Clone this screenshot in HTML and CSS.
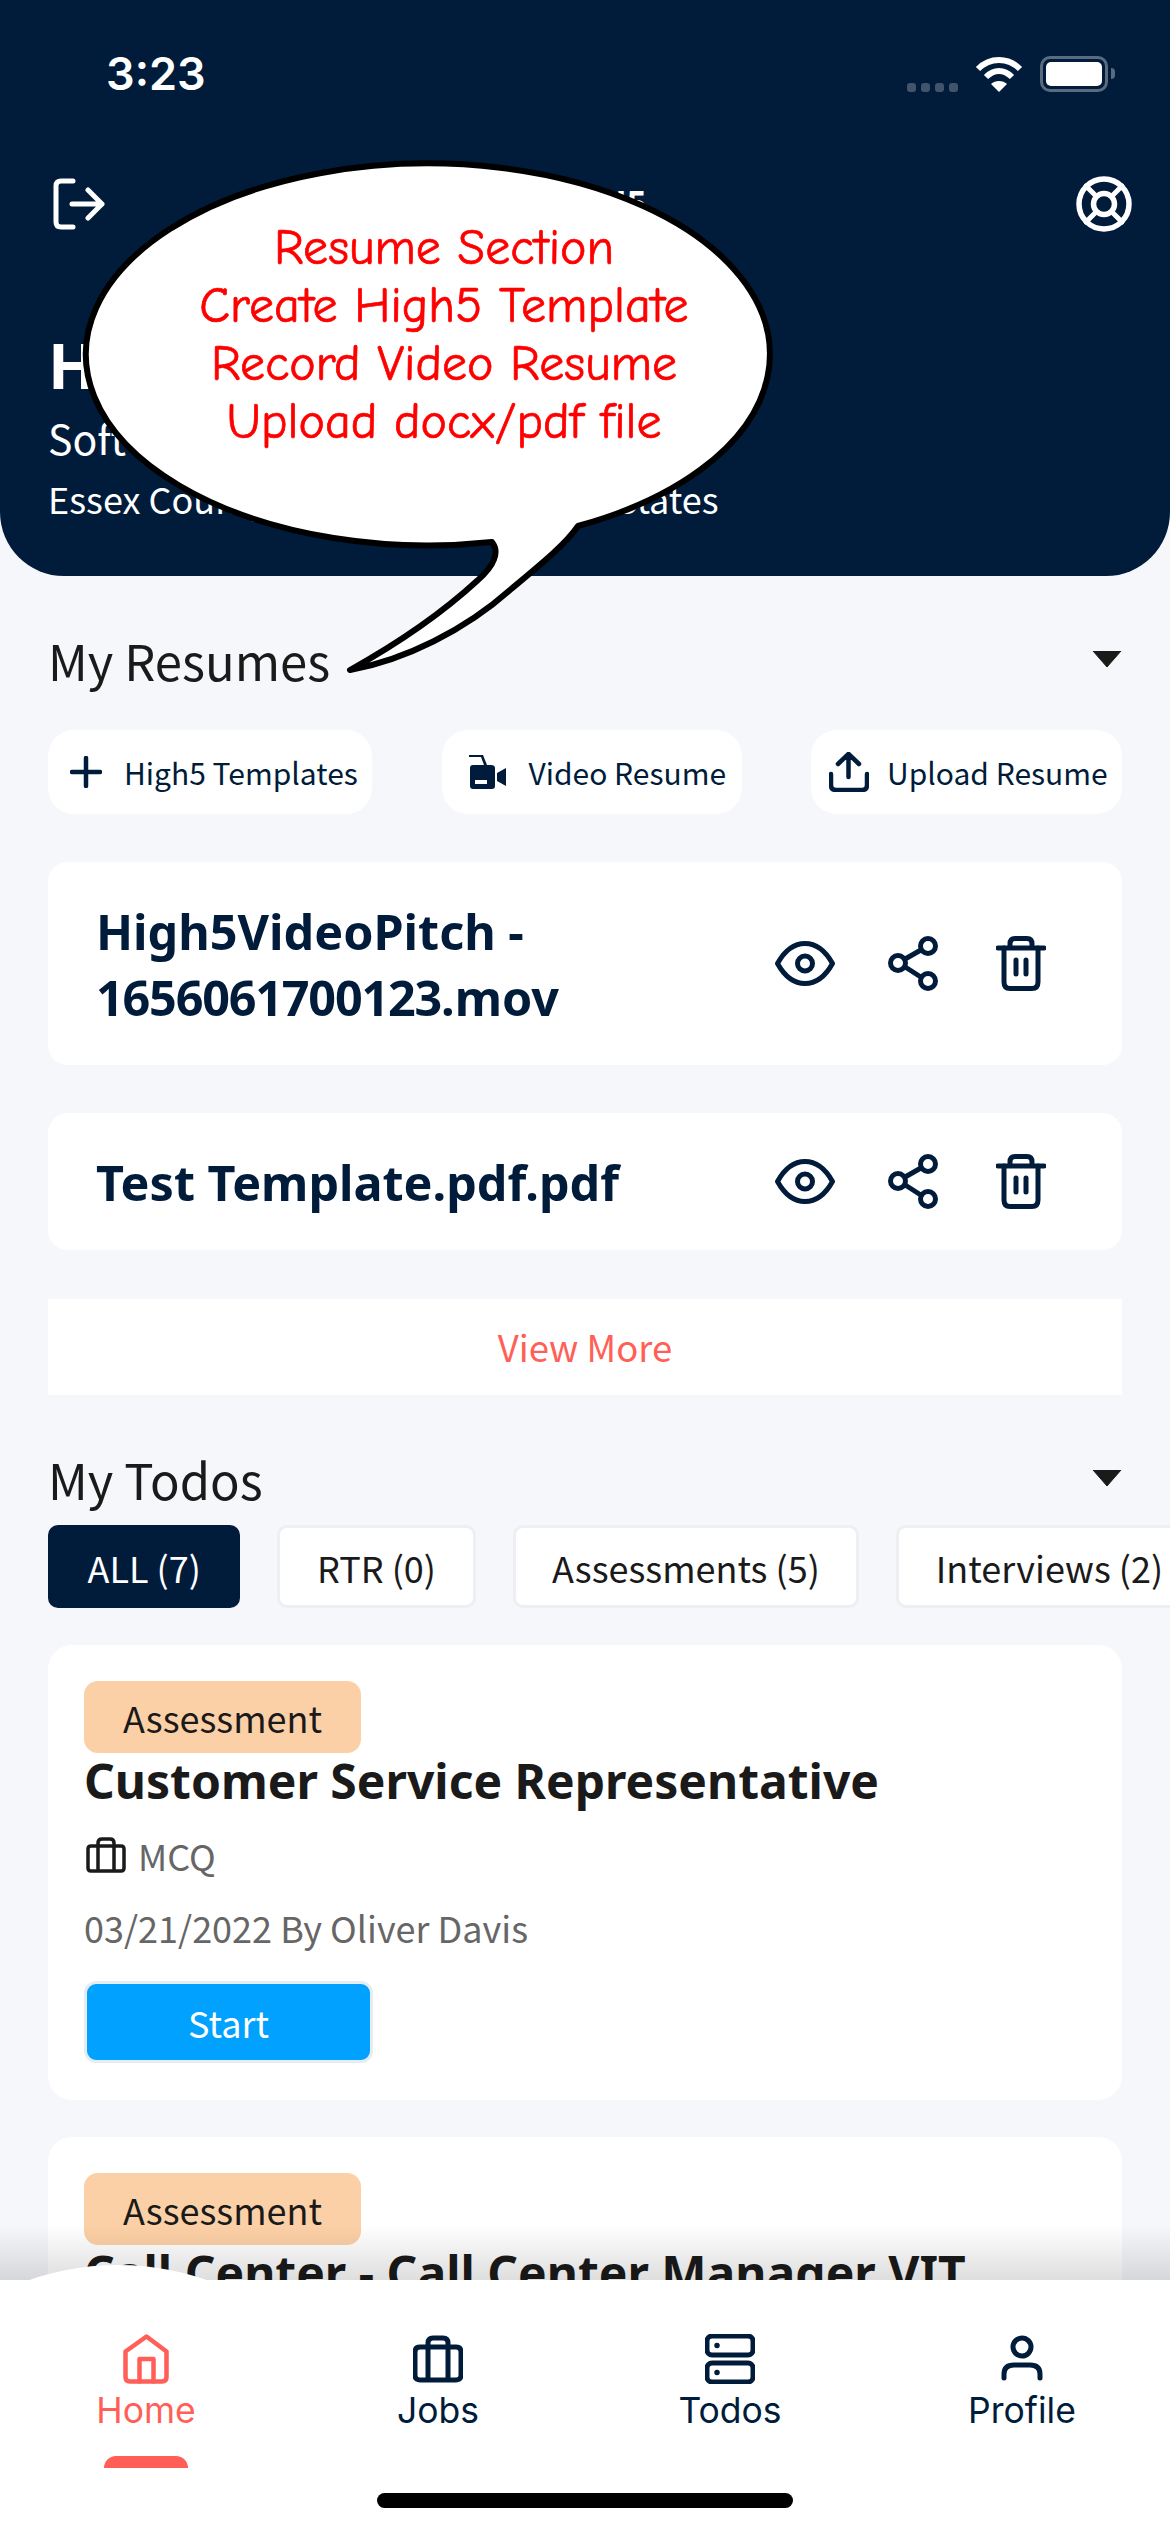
FILE: index.html
```html
<!DOCTYPE html>
<html lang="en">
<head>
<meta charset="utf-8">
<title>High5 Home</title>
<link rel="stylesheet" href="styles.css">
</head>
<body>
<div class="screen">
  <header class="hero">
    <div class="status">
      <span class="clock">3:23</span>
      <div class="status-icons">
        <div class="signal"><i></i><i></i><i></i><i></i></div>
        <svg class="wifi" width="48" height="36" viewBox="0 0 48 36"><path class="wifi-arc" d="M3 13 C15 1 33 1 45 13"/><path class="wifi-arc" d="M11 21 C19 13 29 13 37 21"/><path class="wifi-dot" d="M24 36 L16 28 C20 24 28 24 32 28 Z"/></svg>
        <div class="battery"><div class="battery-fill"></div></div>
        <div class="battery-nub"></div>
      </div>
    </div>
    <div class="toprow">
      <svg class="exit-icon" width="52" height="52" viewBox="0 0 52 52"><path d="M20 3 H8 Q3 3 3 8 V44 Q3 49 8 49 H20"/><path d="M19 26 H49 M35 12 L49 26 L35 40"/></svg>
      <span class="brand">HIGH5</span>
      <svg class="help-icon" width="56" height="56" viewBox="0 0 56 56"><circle cx="28" cy="28" r="25"/><circle cx="28" cy="28" r="10.500"/><path d="M10 10 L18.500 18.500 M46 10 L37.500 18.500 M10 46 L18.500 37.500 M46 46 L37.500 37.500"/></svg>
    </div>
    <h1 class="name">Hi</h1>
    <p class="role">Software</p>
    <p class="location">Essex County, New Jersey, United States</p>
  </header>

  <main class="content">
    <div class="section-head">
      <h2 class="section-title">My Resumes</h2>
      <svg class="caret" width="30" height="16" viewBox="0 0 30 16"><path d="M1 0 H29 L15 16 Z"/></svg>
    </div>
    <div class="chips">
      <div class="chip chip-a">
        <svg class="ico" width="32" height="32" viewBox="0 0 32 32"><path d="M16 2 V30 M2 16 H30"/></svg>
        <span>High5 Templates</span>
      </div>
      <div class="chip chip-b">
        <svg width="38" height="34" viewBox="0 0 38 34"><path class="solid" d="M2 13 Q2 10 5 10 H16 L13 2 H1 V0 H15 L19 10 H23 Q27 10 27 13 V31 Q27 34 24 34 H5 Q2 34 2 31 Z M7 25 V29 H19 V25 Z M29 18 L38 13 V31 L29 26 Z"/></svg>
        <span>Video Resume</span>
      </div>
      <div class="chip chip-c">
        <svg class="ico" width="40" height="40" viewBox="0 0 40 40"><path d="M19.5 2 V25 M9 12 L19.5 2 L30 12"/><path d="M2 22 V33 Q2 38 7 38 H33 Q38 38 38 33 V22"/></svg>
        <span>Upload Resume</span>
      </div>
    </div>

    <article class="file file-tall">
      <h3 class="file-name">High5VideoPitch -<br><span class="digits">1656061700123</span>.mov</h3>
      <div class="file-actions">
        <svg class="act" width="60" height="45" viewBox="0 0 60 45"><path d="M2.5 22.5 C10 9 20 2.5 30 2.5 C40 2.5 50 9 57.5 22.5 C50 36 40 42.500 30 42.500 C20 42.500 10 36 2.500 22.500 Z"/><circle cx="30" cy="22.500" r="7.500"/></svg>
        <svg class="act" width="50" height="55" viewBox="0 0 50 55"><circle cx="40" cy="10" r="7.500"/><circle cx="10" cy="27" r="7.500"/><circle cx="40" cy="45" r="7.500"/><path d="M18 22.500 L32 14.500 M18 31.500 L32 40.500"/></svg>
        <svg class="act" width="50" height="55" viewBox="0 0 50 55"><path d="M2 12 H48"/><path d="M8 12 V46 Q8 52.500 14 52.500 H36 Q42 52.500 42 46 V12"/><path d="M14 11 V8 Q14 2.500 19 2.500 H31 Q36 2.500 36 8 V11"/><path d="M20 24 V38 M30 24 V38"/></svg>
      </div>
    </article>
    <article class="file file-short">
      <h3 class="file-name">Test Template.pdf.pdf</h3>
      <div class="file-actions">
        <svg class="act" width="60" height="45" viewBox="0 0 60 45"><path d="M2.5 22.5 C10 9 20 2.5 30 2.5 C40 2.5 50 9 57.5 22.5 C50 36 40 42.500 30 42.500 C20 42.500 10 36 2.500 22.500 Z"/><circle cx="30" cy="22.500" r="7.500"/></svg>
        <svg class="act" width="50" height="55" viewBox="0 0 50 55"><circle cx="40" cy="10" r="7.500"/><circle cx="10" cy="27" r="7.500"/><circle cx="40" cy="45" r="7.500"/><path d="M18 22.500 L32 14.500 M18 31.500 L32 40.500"/></svg>
        <svg class="act" width="50" height="55" viewBox="0 0 50 55"><path d="M2 12 H48"/><path d="M8 12 V46 Q8 52.500 14 52.500 H36 Q42 52.500 42 46 V12"/><path d="M14 11 V8 Q14 2.500 19 2.500 H31 Q36 2.500 36 8 V11"/><path d="M20 24 V38 M30 24 V38"/></svg>
      </div>
    </article>
    <div class="view-more">View More</div>

    <div class="section-head section-head-todos">
      <h2 class="section-title">My Todos</h2>
      <svg class="caret" width="30" height="16" viewBox="0 0 30 16"><path d="M1 0 H29 L15 16 Z"/></svg>
    </div>
    <div class="tabs">
      <div class="tab tab-active">ALL (7)</div>
      <div class="tab">RTR (0)</div>
      <div class="tab">Assessments (5)</div>
      <div class="tab">Interviews (2)</div>
    </div>

    <article class="todo">
      <div class="badge">Assessment</div>
      <h3 class="todo-title">Customer Service Representative</h3>
      <div class="todo-meta">
        <svg class="case" width="40" height="36" viewBox="0 0 40 36"><path d="M5 9 H35 Q38 9 38 12 V31 Q38 34 35 34 H5 Q2 34 2 31 V12 Q2 9 5 9 Z M12 34 V6 Q12 2 16 2 H24 Q28 2 28 6 V34"/></svg>
        <span>MCQ</span>
      </div>
      <p class="todo-date">03/21/2022 By Oliver Davis</p>
      <div class="start">Start</div>
    </article>
    <article class="todo todo-next">
      <div class="badge">Assessment</div>
      <h3 class="todo-title">Call Center - Call Center Manager VIT</h3>
    </article>
  </main>

  <svg class="bubble" width="1170" height="700" viewBox="0 0 1170 700"><path d="M578 526 A342 191 0 1 0 492 542 C500 552 494 566 478 580 C440 615 395 645 350 670 C405 660 465 630 510 590 C540 565 565 545 578 526 Z"/></svg>
  <div class="bubble-text">
    <span>Resume Section</span>
    <span>Create High5 Template</span>
    <span>Record Video Resume</span>
    <span>Upload docx/pdf file</span>
  </div>

  <div class="nav-shade"></div>
  <nav class="nav">
    <div class="nav-item nav-on">
      <svg width="46" height="50" viewBox="0 0 46 50"><path d="M23.500 2.500 L2.500 17.500 V43 Q2.500 47.500 7 47.500 H39 Q43.500 47.500 43.500 43 V17.500 Z"/><path d="M16.500 47.500 V25 H30.500 V47.500"/></svg>
      <span>Home</span>
      <i class="nav-mark"></i>
    </div>
    <div class="nav-item">
      <svg width="50" height="46" viewBox="0 0 50 46"><path d="M7 11 H43 Q48 11 48 16 V39 Q48 44 43 44 H7 Q2 44 2 39 V16 Q2 11 7 11 Z M15 44 V7 Q15 2 20 2 H30 Q35 2 35 7 V44"/></svg>
      <span>Jobs</span>
    </div>
    <div class="nav-item">
      <svg width="50" height="50" viewBox="0 0 50 50"><rect x="2" y="2" width="46" height="19" rx="5"/><rect x="2" y="29" width="46" height="19" rx="5"/><circle class="dot" cx="12" cy="11.500" r="2"/><circle class="dot" cx="12" cy="38.500" r="2"/></svg>
      <span>Todos</span>
    </div>
    <div class="nav-item">
      <svg width="42" height="46" viewBox="0 0 42 46"><circle cx="21" cy="11" r="9"/><path d="M3 42 V38 Q3 29 13 29 H29 Q39 29 39 38 V42"/></svg>
      <span>Profile</span>
    </div>
    <div class="home-bar"></div>
  </nav>
</div>
</body>
</html>
```
FILE: styles.css
```css
* { box-sizing: border-box; }
html, body { margin: 0; padding: 0; }
body { background: #f5f7fb; font-family: "Noto Sans CJK SC", "Noto Sans", sans-serif; color: #1a1a1a; }
h1, h2, h3, p { margin: 0; font-weight: 400; }
svg { flex: none; }
.screen { position: relative; width: 1170px; height: 2532px; overflow: hidden; background: #f5f7fb; }

.hero { height: 576px; background: #001c3a; color: #fff; border-radius: 0 0 64px 64px; padding: 0 38px 0 48px; }
.status { height: 148px; display: flex; align-items: center; justify-content: space-between; padding: 0 17px 0 58px; margin-right: -38px; }
.clock { font-family: Inter, sans-serif; font-weight: 600; font-size: 45px; line-height: 60px; color: #fff; }
.status-icons { display: flex; align-items: flex-start; padding-right: 38px; }
.signal { display: flex; gap: 5px; margin-top: 27px; margin-right: 17px; }
.signal i { width: 9px; height: 9px; border-radius: 3px; background: #41546b; }
.wifi { margin-right: 17px; }
.wifi-arc { fill: none; stroke: #fff; stroke-width: 6; }
.wifi-dot { fill: #fff; }
.battery { width: 68px; height: 36px; border: 3px solid #5a6a7f; border-radius: 10px; padding: 3px; }
.battery-fill { width: 100%; height: 100%; background: #fff; border-radius: 5px; }
.battery-nub { width: 4px; height: 11px; background: #5a6a7f; margin: 12px 0 0 3px; border-radius: 0 4px 4px 0; }
.toprow { height: 112px; display: flex; align-items: center; justify-content: space-between; padding: 0 0 0 5px; }
.exit-icon path, .help-icon path, .help-icon circle { fill: none; stroke: #fff; stroke-width: 5; stroke-linecap: round; stroke-linejoin: round; }
.help-icon circle { stroke-width: 5.5; }
.brand { font-family: "Noto Sans", sans-serif; font-weight: 700; font-size: 35px; line-height: 30px; }
.name { font-family: "Noto Sans", sans-serif; font-weight: 700; font-size: 63px; line-height: 80px; margin-top: 65px; }
.role { font-size: 41px; line-height: 60px; margin-top: 2px; }
.location { font-size: 36px; line-height: 50px; margin-top: 6px; }

.content { padding: 0 48px; }
.section-head { display: flex; align-items: center; justify-content: space-between; height: 80px; margin-top: 44px; }
.section-head-todos { margin-top: 44px; }
.section-title { font-size: 49px; line-height: 80px; color: #1a1a1a; }
.caret { margin-top: -3px; }
.caret path { fill: #1a1a1a; stroke: #1a1a1a; stroke-width: 1; stroke-linejoin: round; }

.chips { display: flex; justify-content: space-between; margin-top: 30px; }
.chip { display: flex; align-items: center; height: 84px; background: #fff; border-radius: 26px; font-size: 30px; color: #001c3a; white-space: nowrap; }
.chip-a { width: 324px; padding-left: 22px; gap: 22px; }
.chip-b { width: 300px; padding-left: 26px; gap: 23px; }
.chip-c { width: 311px; padding-left: 18px; gap: 18px; }
.ico path { fill: none; stroke: #001c3a; stroke-width: 4.5; stroke-linecap: round; stroke-linejoin: round; }
.solid { fill: #001c3a; fill-rule: evenodd; }

.file { display: flex; align-items: center; justify-content: space-between; background: #fff; border-radius: 20px; padding: 0 76px 0 48px; }
.file-tall { height: 203px; margin-top: 48px; }
.file-short { height: 137px; margin-top: 48px; }
.file-name { font-family: "Noto Sans", sans-serif; font-weight: 700; font-size: 48.500px; line-height: 66px; color: #001c3a; }
.digits { letter-spacing: -1.200px; }
.file-actions { display: flex; align-items: center; gap: 53px; }
.file-actions svg + svg + svg { margin-left: 5px; }
.act path, .act circle { fill: none; stroke: #001c3a; stroke-width: 5; stroke-linecap: round; stroke-linejoin: round; }
.view-more { height: 96px; margin-top: 49px; background: #fff; color: #ff5f57; font-size: 36.500px; line-height: 96px; text-align: center; }

.tabs { display: flex; gap: 37px; margin-top: 6px; }
.tab { flex: none; height: 83px; padding: 0 36.500px; display: flex; align-items: center; background: #fff; border: 3px solid #eeeff2; border-radius: 10px; font-size: 36px; color: #1a1a1a; white-space: nowrap; }
.tab-active { background: #001c3a; border-color: #001c3a; color: #fff; }

.todo { background: #fff; border-radius: 24px; padding: 36px; height: 455px; margin-top: 37px; }
.todo-next { margin-top: 37px; }
.badge { width: 277px; height: 72px; background: #fcd0a6; border-radius: 14px; font-size: 36px; line-height: 72px; text-align: center; color: #1a1a1a; }
.todo-title { font-family: "Noto Sans", sans-serif; font-weight: 700; font-size: 48px; line-height: 66px; margin-top: -5px; color: #1a1a1a; white-space: nowrap; }
.todo-meta { display: flex; align-items: center; gap: 12px; margin-top: 16px; font-size: 36px; line-height: 50px; color: #666; padding-left: 2px; }
.case path { fill: none; stroke: #1a1a1a; stroke-width: 3.500; stroke-linejoin: round; }
.todo-date { font-size: 36px; line-height: 50px; color: #666; margin-top: 22px; }
.start { width: 289px; height: 82px; margin-top: 29px; background: #00a1ff; border: 3px solid #e6edf2; border-radius: 12px; color: #fff; font-size: 36px; line-height: 76px; text-align: center; }

.bubble { position: absolute; left: 0; top: 0; filter: blur(0.6px); }
.bubble path { fill: #fff; stroke: #000; stroke-width: 6; stroke-linejoin: round; }
.bubble-text { position: absolute; left: 144px; top: 219px; width: 600px; display: flex; flex-direction: column; align-items: center; font-family: "Comic Sans MS", "Comic Neue", Lato, sans-serif; font-size: 50px; line-height: 58px; color: #ff0000; -webkit-text-stroke: 0.7px #ff0000; }

.nav-shade { position: absolute; left: 0; right: 0; top: 2225px; height: 55px; background: linear-gradient(to bottom, rgba(0,0,0,0), rgba(0,0,0,.13)); }
.nav { position: absolute; left: 0; right: 0; top: 2280px; height: 252px; background: #fff; display: grid; grid-template-columns: repeat(4, 292px); padding-top: 54px; }
.nav::before { content: ""; position: absolute; left: -154px; top: -15px; width: 544px; height: 544px; border-radius: 50%; background: #fff; }
.nav-item { position: relative; display: flex; flex-direction: column; align-items: center; height: 100px; }
.nav-item svg { height: 50px; }
.nav-item span { font-family: Inter, sans-serif; font-size: 35.500px; line-height: 44px; color: #001c3a; margin-top: 5px; }
.nav-item path, .nav-item rect, .nav-item circle { fill: none; stroke: #001c3a; stroke-width: 5; stroke-linecap: round; stroke-linejoin: round; }
.nav-item .dot { fill: #001c3a; stroke-width: 1.500; }
.nav-on path { stroke: #ff5f57; stroke-width: 4.500; }
.nav-on span { color: #ff5f57; }
.nav-mark { position: absolute; left: 104px; top: 122px; width: 84px; height: 12px; background: #ff5f57; border-radius: 12px 12px 0 0; }
.home-bar { position: absolute; left: 377px; top: 213px; width: 416px; height: 15px; border-radius: 8px; background: #000; }
```
